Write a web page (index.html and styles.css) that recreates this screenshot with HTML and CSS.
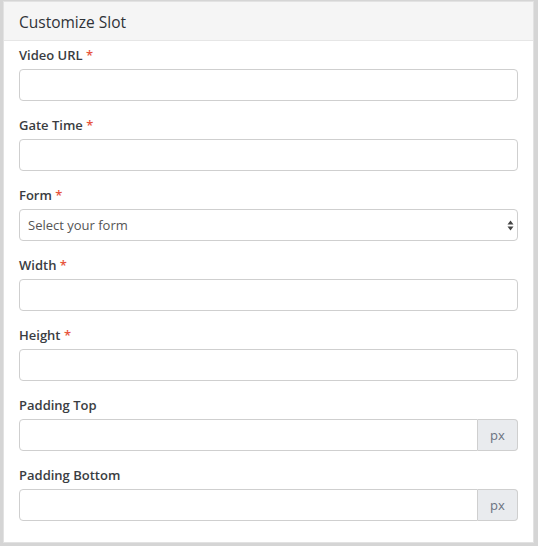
FILE: index.html
```html
<!DOCTYPE html>
<html>
<head>
<meta charset="utf-8">
<link rel="stylesheet" href="styles.css">
</head>
<body>
<div class="panel">
  <div class="panel-header">Customize Slot</div>
  <div class="panel-body">
    <div class="group">
      <label class="label">Video URL <span class="req">*</span></label>
      <div class="input"></div>
    </div>
    <div class="group">
      <label class="label">Gate Time <span class="req">*</span></label>
      <div class="input"></div>
    </div>
    <div class="group">
      <label class="label">Form <span class="req">*</span></label>
      <div class="input select">
        <span class="placeholder">Select your form</span>
        <svg class="arrows" width="7" height="11" viewBox="0 0 7 11"><path d="M3.5 0.5 L6.5 4.5 L0.5 4.5 Z" fill="#444"/><path d="M3.5 10.5 L6.5 6.5 L0.5 6.5 Z" fill="#444"/></svg>
      </div>
    </div>
    <div class="group">
      <label class="label">Width <span class="req">*</span></label>
      <div class="input"></div>
    </div>
    <div class="group">
      <label class="label">Height <span class="req">*</span></label>
      <div class="input"></div>
    </div>
    <div class="group">
      <label class="label">Padding Top</label>
      <div class="input-group"><div class="input grow"></div><div class="addon">px</div></div>
    </div>
    <div class="group last">
      <label class="label">Padding Bottom</label>
      <div class="input-group"><div class="input grow"></div><div class="addon">px</div></div>
    </div>
  </div>
</div>
</body>
</html>
```
FILE: styles.css
```css
html, body {
  margin: 0;
  padding: 0;
}
body {
  background: #d5d5d5;
  width: 538px;
  height: 546px;
  box-sizing: border-box;
  padding: 1px 4px 3px 3px;
  font-family: "Open Sans", "Liberation Sans", sans-serif;
  color: #333;
}
.panel {
  background: #fff;
  border: 1px solid #e2e2e2;
  height: 100%;
  box-sizing: border-box;
}
.panel-header {
  background: #f5f5f5;
  border-bottom: 1px solid #e6e6e6;
  height: 39px;
  box-sizing: border-box;
  padding: 1px 15px 0;
  display: flex;
  align-items: center;
  font-size: 15.5px;
  color: #2f3237;
}
.panel-body {
  padding: 4px 15px 20px;
}
.group {
  margin-bottom: 14px;
}
.group.last {
  margin-bottom: 0;
}
.label {
  display: block;
  font-size: 13px;
  font-weight: 600;
  line-height: 20px;
  margin-bottom: 4px;
  color: #3a3d42;
}
.req {
  color: #e7553e;
}
.input {
  height: 32px;
  box-sizing: border-box;
  border: 1px solid #cfcfcf;
  border-radius: 4px;
  background: #fff;
}
.select {
  display: flex;
  align-items: center;
  justify-content: space-between;
  padding: 0 3px 0 8px;
}
.placeholder {
  font-size: 13px;
  color: #555;
}
.arrows {
  display: block;
}
.input-group {
  display: flex;
}
.grow {
  flex: 1;
  border-radius: 4px 0 0 4px;
}
.addon {
  width: 40px;
  height: 32px;
  box-sizing: border-box;
  border: 1px solid #cfcfcf;
  border-left: none;
  border-radius: 0 4px 4px 0;
  background: #e9ebee;
  color: #6b7280;
  font-size: 13px;
  display: flex;
  align-items: center;
  justify-content: center;
}
```
